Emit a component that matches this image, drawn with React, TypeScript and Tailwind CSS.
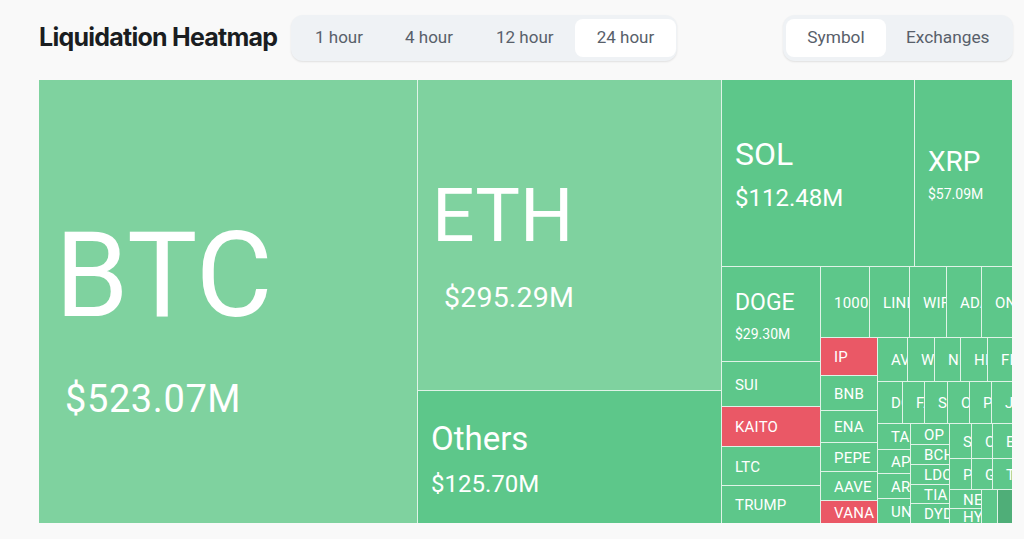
import React from 'react';

interface CellProps {
  label: string;
  value?: string;
  className?: string;
  labelClass?: string;
  valueClass?: string;
  red?: boolean;
  dark?: boolean;
}

const Cell: React.FC<CellProps> = (props) => {
  const bg = props.red ? 'bg-[#ea5866]' : props.dark ? 'bg-[#4fae78]' : 'bg-[#5dc78a]';
  return (
    <div className={`${bg} flex min-h-0 min-w-0 shrink-0 flex-col justify-center overflow-hidden whitespace-nowrap text-white ${props.className || ''}`}>
      <div className={props.labelClass || 'pl-[13px] pt-[1px] text-[15px] leading-[18px] tracking-[0.2px]'}>{props.label}</div>
      {props.value && <div className={props.valueClass}>{props.value}</div>}
    </div>
  );
};

const Small: React.FC<{ names: string[]; className: string; sizes: string[] }> = (props) => (
  <div className={`flex shrink-0 gap-px ${props.className}`}>
    {props.names.map((n, i) => (
      <Cell key={n} label={n} className={props.sizes[i]} />
    ))}
  </div>
);

const App: React.FC = () => {
  return (
    <div className="h-[539px] w-[1024px] overflow-hidden bg-[#f9f9f9] pl-[39px] font-['Roboto',sans-serif]">
      <div className="flex h-[80px] w-[974px] items-center justify-between pb-[5px]">
        <div className="flex items-center">
          <h1 className="w-[252px] font-['Inter',sans-serif] text-[25px] font-bold tracking-[-0.75px] whitespace-nowrap text-[#1a1d21]">Liquidation Heatmap</h1>
          <div className="flex h-[46px] w-[386px] items-center rounded-[12px] bg-[#eff2f5] pl-[4px] pr-[1px] text-[17px] text-[#58606a] shadow-[0_1px_2px_rgba(0,0,0,0.1)]">
            <div className="w-[89px] pl-[20px]">1 hour</div>
            <div className="w-[91px] pl-[21px]">4 hour</div>
            <div className="w-[100px] pl-[21px]">12 hour</div>
            <div className="flex h-[38px] w-[101px] items-center justify-center rounded-[8px] bg-white">24 hour</div>
          </div>
        </div>
        <div className="flex h-[46px] w-[230px] items-center rounded-[12px] bg-[#eff2f5] p-[3px] text-[17.3px] text-[#58606a] shadow-[0_1px_2px_rgba(0,0,0,0.1)]">
          <div className="flex h-[38px] w-[100px] items-center justify-center rounded-[8px] bg-white">Symbol</div>
          <div className="flex-1 pl-[20px]">Exchanges</div>
        </div>
      </div>

      <div className="flex h-[443px] w-[973px] gap-px bg-[#dff3e7] text-white">
        <div className="flex w-[378px] shrink-0 flex-col justify-center bg-[#7fd29f] pt-[24px]">
          <div className="pl-[16px] text-[118px] leading-[140px]">BTC</div>
          <div className="mt-[30px] pl-[26px] text-[38px] leading-[46px] tracking-[0.6px]">$523.07M</div>
        </div>

        <div className="flex w-[303px] shrink-0 flex-col gap-px">
          <div className="flex h-[310px] shrink-0 flex-col justify-center bg-[#7fd29f] pt-[13px]">
            <div className="pl-[14px] text-[75px] leading-[92px]">ETH</div>
            <div className="mt-[20px] pl-[26px] text-[28.5px] leading-[34px] tracking-[0.2px]">$295.29M</div>
          </div>
          <Cell
            label="Others"
            value="$125.70M"
            className="flex-1 pt-[5px]"
            labelClass="pl-[13px] text-[33px] leading-[38px]"
            valueClass="mt-[11px] pl-[13px] text-[24px] leading-[30px]"
          />
        </div>

        <div className="flex w-[290px] shrink-0 flex-col gap-px">
          <div className="flex h-[186px] shrink-0 gap-px">
            <Cell
              label="SOL"
              value="$112.48M"
              className="w-[192px] pt-[2px]"
              labelClass="pl-[13px] text-[32px] leading-[38px]"
              valueClass="mt-[10px] pl-[13px] text-[24px] leading-[30px]"
            />
            <Cell
              label="XRP"
              value="$57.09M"
              className="flex-1 pt-[1px]"
              labelClass="pl-[13px] text-[28px] leading-[34px]"
              valueClass="mt-[6px] pl-[13px] text-[14px] leading-[18px]"
            />
          </div>

          <div className="flex min-h-0 flex-1 gap-px">
            <div className="flex w-[98px] shrink-0 flex-col gap-px">
              <Cell
                label="DOGE"
                value="$29.30M"
                className="h-[94px] pt-[4px]"
                labelClass="pl-[13px] text-[23px] leading-[28px]"
                valueClass="mt-[8px] pl-[13px] text-[14px] leading-[18px]"
              />
              <Cell label="SUI" className="h-[44px]" />
              <Cell label="KAITO" red className="h-[39px]" />
              <Cell label="LTC" className="h-[38px]" />
              <Cell label="TRUMP" className="flex-1" />
            </div>

            <div className="flex min-w-0 flex-1 flex-col gap-px">
              <Small
                className="h-[70px]"
                names={['1000PEPE', 'LINK', 'WIF', 'ADA', 'ONDO']}
                sizes={['w-[48px]', 'w-[39px]', 'w-[36px]', 'w-[34px]', 'flex-1']}
              />
              <div className="flex min-h-0 flex-1 gap-px">
                <div className="flex w-[56px] shrink-0 flex-col gap-px">
                  <Cell label="IP" red className="h-[37px]" />
                  <Cell label="BNB" className="h-[34px]" />
                  <Cell label="ENA" className="h-[31px]" />
                  <Cell label="PEPE" className="h-[28px]" />
                  <Cell label="AAVE" className="h-[28px]" />
                  <Cell label="VANA" red className="flex-1" />
                </div>

                <div className="flex min-w-0 flex-1 flex-col gap-px">
                  <Small
                    className="h-[43px]"
                    names={['AVAX', 'WLD', 'NEAR', 'HBAR', 'FIL']}
                    sizes={['w-[29px]', 'w-[26px]', 'w-[25px]', 'w-[26px]', 'flex-1']}
                  />
                  <Small
                    className="h-[41px]"
                    names={['DOT', 'FARTCOIN', 'SEI', 'OM', 'PNUT', 'JUP']}
                    sizes={['w-[24px]', 'w-[21px]', 'w-[22px]', 'w-[21px]', 'w-[21px]', 'flex-1']}
                  />
                  <div className="flex min-h-0 flex-1 gap-px">
                    <div className="flex w-[32px] shrink-0 flex-col gap-px">
                      <Cell label="TAO" className="h-[25px]" />
                      <Cell label="APT" className="h-[23px]" />
                      <Cell label="ARB" className="h-[24px]" />
                      <Cell label="UNI" className="flex-1" />
                    </div>
                    <div className="flex w-[38px] shrink-0 flex-col gap-px">
                      <Cell label="OP" className="h-[20px]" />
                      <Cell label="BCH" className="h-[19px]" />
                      <Cell label="LDO" className="h-[19px]" />
                      <Cell label="TIA" className="h-[18px]" />
                      <Cell label="DYDX" className="flex-1" />
                    </div>
                    <div className="flex min-w-0 flex-1 flex-col gap-px">
                      <Small className="h-[34px]" names={['S', 'CRV', 'ETC']} sizes={['w-[21px]', 'w-[20px]', 'flex-1']} />
                      <Small className="h-[30px]" names={['POL', 'GALA', 'TON']} sizes={['w-[21px]', 'w-[20px]', 'flex-1']} />
                      <div className="flex min-h-0 flex-1 gap-px">
                        <div className="flex w-[31px] shrink-0 flex-col gap-px">
                          <Cell label="NEIRO" className="h-[18px]" />
                          <Cell label="HYPE" className="flex-1" />
                        </div>
                        <Cell label="" className="w-[15px]" />
                        <Cell label="" dark className="flex-1" />
                      </div>
                    </div>
                  </div>
                </div>
              </div>
            </div>
          </div>
        </div>
      </div>
    </div>
  );
};

export default App;
